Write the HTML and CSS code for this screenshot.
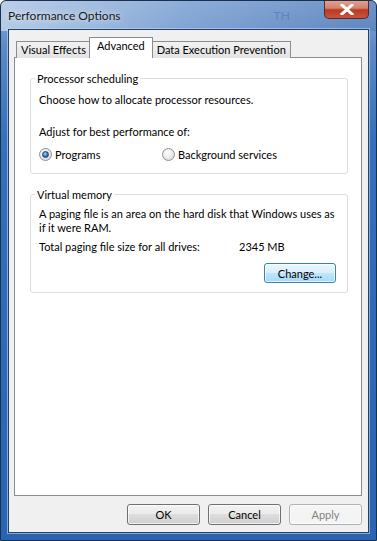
FILE: index.html
```html
<!DOCTYPE html>
<html lang="en">
<head>
    <meta charset="UTF-8">
    <title>Performance Options</title>
    <link rel="stylesheet" href="styles.css">
</head>
<body>
    <div class="window">
        <div class="titlebar">
            <span class="title">Performance Options</span>
            <span class="ghost">TH</span>
            <span class="close">
                <svg width="14" height="11" viewBox="0 0 14 11">
                    <path d="M2 1 L12 10 M12 1 L2 10" stroke="#fff" stroke-width="3" stroke-linecap="square"/>
                </svg>
            </span>
        </div>

        <div class="client">
            <div class="tabs">
                <div class="tab">Visual Effects</div>
                <div class="tab active">Advanced</div>
                <div class="tab">Data Execution Prevention</div>
            </div>

            <div class="panel">
                <fieldset class="group">
                    <legend>Processor scheduling</legend>
                    <p class="line first">Choose how to allocate processor resources.</p>
                    <p class="line adjust">Adjust for best performance of:</p>
                    <div class="radios">
                        <label class="radio"><span class="dot checked"></span>Programs</label>
                        <label class="radio"><span class="dot"></span>Background services</label>
                    </div>
                </fieldset>

                <fieldset class="group vm">
                    <legend>Virtual memory</legend>
                    <p class="wrap">A paging file is an area on the hard disk that Windows uses as if it were RAM.</p>
                    <div class="total">
                        <span class="total-label">Total paging file size for all drives:</span>
                        <span>2345 MB</span>
                    </div>
                    <div class="change-row">
                        <button class="btn default">Change...</button>
                    </div>
                </fieldset>
            </div>

            <div class="actions">
                <button class="btn">OK</button>
                <button class="btn">Cancel</button>
                <button class="btn disabled">Apply</button>
            </div>
        </div>
    </div>
</body>
</html>
```

FILE: styles.css
```css
/* Base */
body {
    margin: 0;
    font-family: Lato, 'Open Sans', sans-serif;
    font-size: 11px;
    color: #000;
}

/* Window frame */
.window {
    width: 377px;
    height: 541px;
    box-sizing: border-box;
    border: 1px solid #1c2f4d;
    border-radius: 6px 6px 0 0;
    background:
        linear-gradient(to right, rgba(200, 216, 236, 0.8) 0%, rgba(150, 180, 220, 0.45) 50%, rgba(60, 100, 165, 0.3) 100%) top / 100% 30px no-repeat,
        linear-gradient(to bottom, #86a8d6 0, #5a88c4 50px, #3570ba 140px, #2a63b0 100%);
    overflow: hidden;
}

.titlebar {
    height: 28px;
    display: flex;
    align-items: flex-start;
    position: relative;
}

.title {
    margin: 7px 0 0 7px;
    font-size: 12px;
    color: #1a1a1a;
    text-shadow: 0 0 6px rgba(255, 255, 255, 0.9);
}

.ghost {
    margin: 7px 0 0 153px;
    font-size: 12px;
    color: #5f84bd;
}

.close {
    position: absolute;
    top: -1px;
    right: 7px;
    width: 45px;
    height: 19px;
    box-sizing: border-box;
    border: 1px solid #5a2a2a;
    border-top: none;
    border-radius: 0 0 5px 5px;
    background: linear-gradient(to bottom, #e8a493 0%, #d4826e 45%, #b83a22 55%, #c8553b 100%);
    display: flex;
    align-items: center;
    justify-content: center;
}

/* Client area */
.client {
    margin: 0 7px 0 7px;
    height: 504px;
    box-sizing: border-box;
    border: 1px solid #233f6a;
    box-shadow: 0 0 0 1px rgba(190, 215, 240, 0.6);
    background: #f0f0f0;
    display: flex;
    flex-direction: column;
}

.tabs {
    display: flex;
    align-items: flex-end;
    margin: 7px 0 0 7px;
    height: 21px;
    position: relative;
    z-index: 1;
}

.tab {
    height: 17px;
    box-sizing: border-box;
    padding: 0 4px;
    line-height: 15px;
    border: 1px solid #898c95;
    border-bottom: none;
    background: linear-gradient(to bottom, #f2f2f2, #e3e3e3);
    margin-right: -1px;
}

.tab.active {
    height: 21px;
    line-height: 16px;
    padding: 0 7px;
    background: #fff;
    margin: 0 -1px 0 -1px;
    position: relative;
    z-index: 2;
}

.panel {
    margin: -1px 6px 0 5px;
    height: 439px;
    box-sizing: border-box;
    border: 1px solid #898c95;
    background: #fff;
    padding: 13px 13px 0 15px;
}

/* Group boxes */
.group {
    margin: 0;
    padding: 0 8px;
    border: 1px solid #d5dfe5;
    border-radius: 3px;
    line-height: 15px;
}

.group legend {
    margin-left: -4px;
    padding: 0 2px;
    line-height: 15px;
}

.group p {
    margin: 0;
}

.line.first {
    margin-top: 6px;
}

.line.adjust {
    margin-top: 17px;
}

.radios {
    display: grid;
    grid-template-columns: 123px auto;
    margin: 8px 0 11px;
}

.radio {
    display: flex;
    align-items: center;
}

.dot {
    width: 13px;
    height: 13px;
    box-sizing: border-box;
    border-radius: 50%;
    border: 1px solid #8e8f8f;
    background: radial-gradient(circle at 40% 35%, #fff 0%, #e6e6e6 60%, #cfcfcf 100%);
    margin-right: 3px;
    display: flex;
    align-items: center;
    justify-content: center;
}

.dot.checked::after {
    content: "";
    width: 5px;
    height: 5px;
    border-radius: 50%;
    background: radial-gradient(circle at 40% 35%, #a8d4f5 0%, #2b73c4 60%, #174f8f 100%);
    border: 1px solid #1d3f6a;
}

.vm {
    margin-top: 13px;
}

.wrap {
    margin-top: 5px !important;
    line-height: 14px;
}

.total {
    display: flex;
    margin-top: 4px;
}

.total-label {
    width: 200px;
}

.change-row {
    display: flex;
    justify-content: flex-end;
    margin: 9px 3px 9px 0;
}

/* Buttons */
.btn {
    font: inherit;
    font-size: 11px;
    color: #000;
    width: 73px;
    height: 21px;
    padding: 0;
    border: 1px solid #707070;
    border-radius: 3px;
    background: linear-gradient(to bottom, #f2f2f2 0%, #ebebeb 49%, #dddddd 50%, #cfcfcf 100%);
    box-shadow: inset 0 0 0 1px rgba(255, 255, 255, 0.7);
}

.btn.default {
    width: 72px;
    height: 20px;
    border-color: #3c7fb1;
    background: linear-gradient(to bottom, #eaf6fd 0%, #d9f0fc 49%, #bee6fd 50%, #a7d9f5 100%);
}

.btn.disabled {
    color: #838383;
    border-color: #adb2b5;
    background: #f4f4f4;
}

.actions {
    display: flex;
    justify-content: flex-end;
    gap: 8px;
    margin: 8px 6px 0 0;
}
```
